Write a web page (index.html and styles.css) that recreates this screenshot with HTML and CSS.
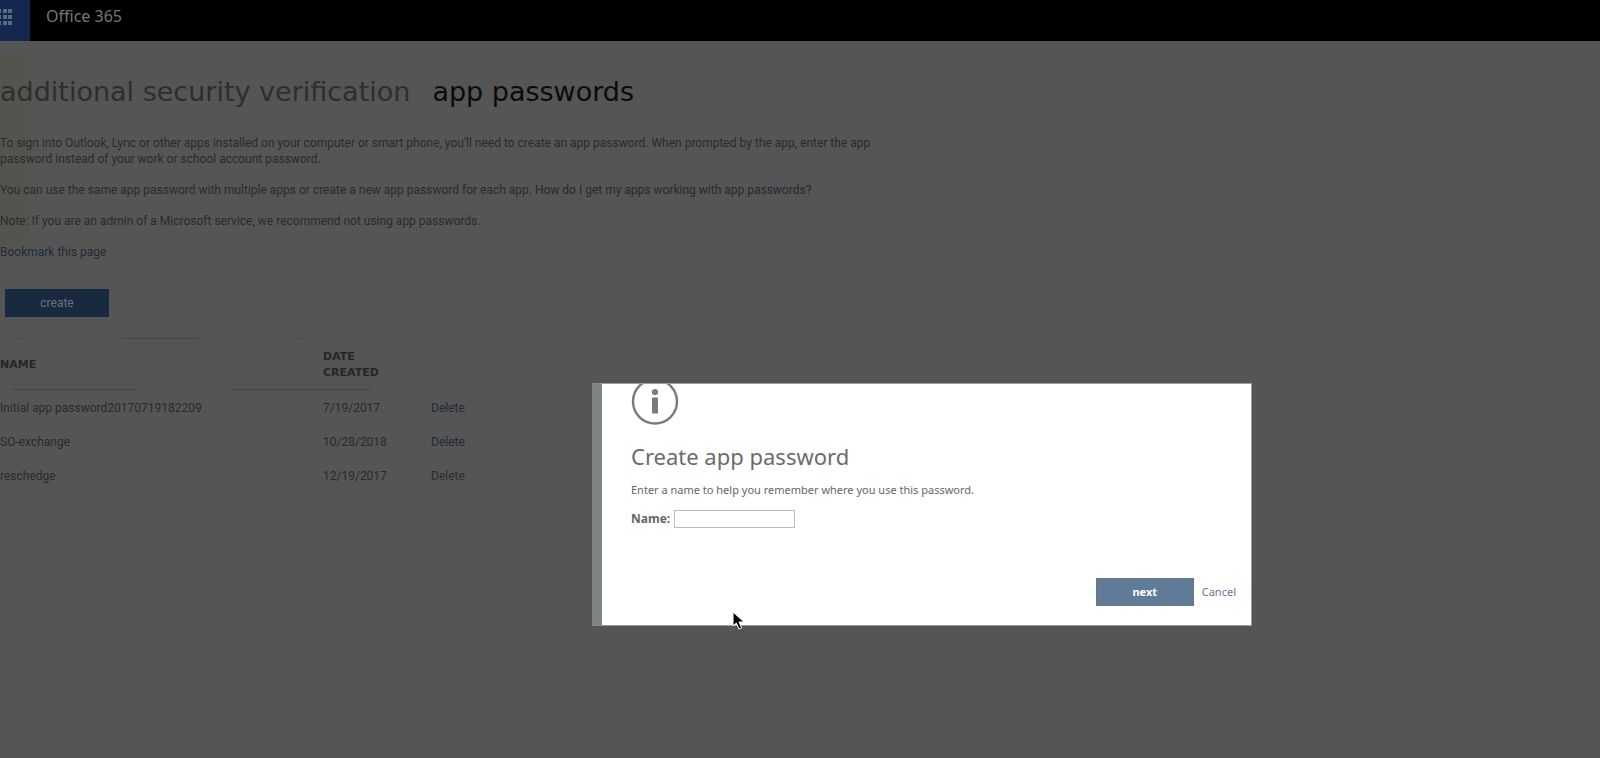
FILE: index.html
```html
<!DOCTYPE html>
<html lang="en">
<head>
<meta charset="utf-8">
<title>App passwords</title>
<link rel="stylesheet" href="styles.css">
</head>
<body>
<header class="topbar">
  <button class="launcher" type="button" aria-label="App launcher">
    <svg width="13" height="18" viewBox="0 0 13 18" aria-hidden="true">
      <path d="M0 1h1v4H0zM3 1h4v4H3zM8 1h4v4H8zM0 7h1v4H0zM3 7h4v4H3zM8 7h4v4H8zM0 13h1v4H0zM3 13h4v4H3zM8 13h4v4H8z"/>
    </svg>
  </button>
  <span class="brand">Office 365</span>
</header>
<main class="page">
  <nav class="tabs">
    <a class="tab" href="#verification">additional security verification</a>
    <h1 class="tab tab-current">app passwords</h1>
  </nav>
  <div class="intro">
    <p>To sign into Outlook, Lync or other apps installed on your computer or smart phone, you'll need to create an app password. When prompted by the app, enter the app password instead of your work or school account password.</p>
    <p>You can use the same app password with multiple apps or create a new app password for each app. <a href="#help">How do I get my apps working with app passwords?</a></p>
    <p>Note: If you are an admin of a Microsoft service, we recommend not using app passwords.</p>
    <p><a href="#bookmark">Bookmark this page</a></p>
  </div>
  <button class="create" type="button">create</button>
  <table class="passwords">
    <thead>
      <tr><th class="col-name" scope="col">NAME</th><th class="col-date" scope="col">DATE CREATED</th><td class="col-action"></td></tr>
    </thead>
    <tbody>
      <tr><td>Initial app password20170719182209</td><td>7/19/2017</td><td><a href="#d1">Delete</a></td></tr>
      <tr><td>SO-exchange</td><td>10/28/2018</td><td><a href="#d2">Delete</a></td></tr>
      <tr><td>reschedge</td><td>12/19/2017</td><td><a class="muted" href="#d3">Delete</a></td></tr>
    </tbody>
  </table>
</main>
<section class="dialog" role="dialog" aria-labelledby="dialog-title">
  <svg class="info" width="48" height="42" viewBox="0 0 48 42" aria-hidden="true">
    <circle cx="24" cy="17.500" r="22" fill="none" stroke="#7b7b7b" stroke-width="2.400"/>
    <circle cx="24" cy="8" r="3.100" fill="#7b7b7b"/>
    <path d="M21 13.500h6v16h-6z" fill="#7b7b7b"/>
  </svg>
  <h2 class="dialog-title" id="dialog-title">Create app password</h2>
  <p class="dialog-text">Enter a name to help you remember where you use this password.</p>
  <div class="field">
    <label for="name">Name:</label>
    <input id="name" type="text">
  </div>
  <div class="actions">
    <button class="next" type="button">next</button>
    <a class="cancel" href="#cancel">Cancel</a>
  </div>
</section>
<svg class="cursor" width="13" height="20" viewBox="0 0 13 20" aria-hidden="true">
  <path d="M1 1v14l3.300-3 2.700 6 2.600-1.200-2.600-5.800H12z" fill="#000" stroke="#fff"/>
</svg>
</body>
</html>
```
FILE: styles.css
```css
* {
  box-sizing: border-box;
}

body {
  margin: 0;
  min-height: 100vh;
  background: #555;
  color: #2b2b2b;
  font: 12px/16px Roboto, "Noto Sans", sans-serif;
}

a {
  color: #202c36;
  text-decoration: none;
}

.topbar {
  display: flex;
  align-items: stretch;
  height: 41px;
  background: #000;
}

.launcher {
  display: flex;
  align-items: flex-start;
  width: 30px;
  padding: 8px 0 0;
  border: 0;
  background: #14274e;
}

.launcher svg {
  fill: #5b6a80;
}

.brand {
  padding: 6px 16px;
  color: #777;
  font-family: "Noto Sans", sans-serif;
  font-size: 16px;
  line-height: 20px;
}

.page {
  padding-top: 31px;
  background: linear-gradient(#54544e, #54544e) 0 14px / 30px 190px no-repeat;
}

.tabs {
  display: flex;
  gap: 22px;
  font-family: "DejaVu Sans", sans-serif;
}

.tab {
  margin: 0;
  color: #2e2e2e;
  font-size: 27px;
  font-weight: 400;
  line-height: 40px;
}

.tab-current {
  color: #0b0b0b;
}

.intro {
  max-width: 900px;
  padding-top: 23px;
}

.intro p {
  margin: 0 0 15px;
}

.create {
  display: block;
  width: 104px;
  height: 28px;
  margin: 29px 0 21px 5px;
  padding: 0;
  border: 0;
  background: #172a40;
  color: #66717e;
  font: inherit;
}

.passwords {
  border-collapse: collapse;
  table-layout: fixed;
  width: 490px;
}

.passwords thead {
  background:
    linear-gradient(#454545, #454545) 122px 0 / 77px 1px no-repeat,
    linear-gradient(#4b4b4b, #4b4b4b) 12px 0 / 15px 1px no-repeat,
    linear-gradient(#4b4b4b, #4b4b4b) 292px 0 / 16px 1px no-repeat,
    linear-gradient(#454545, #454545) 12px 100% / 125px 1px no-repeat,
    linear-gradient(#454545, #454545) 230px 100% / 141px 1px no-repeat;
}

.passwords th,
.passwords td {
  padding: 10px 0 8px;
  text-align: left;
}

.passwords th {
  padding: 11px 40px 9px 0;
  color: #262626;
  font-family: "DejaVu Sans", sans-serif;
  font-size: 11px;
  font-weight: 700;
}

.col-name {
  width: 323px;
}

.col-date {
  width: 108px;
}

.passwords .muted {
  color: #2b2e31;
}

.dialog {
  position: absolute;
  top: 383px;
  left: 37%;
  width: 660px;
  padding: 0 15px 19px 29px;
  border: 1px solid #999;
  border-left: 10px solid #7e8385;
  background: #fff;
  color: #666;
  font-family: "Noto Sans", sans-serif;
  font-size: 11px;
}

.info {
  display: block;
}

.dialog-title {
  margin: 14px 0 10px;
  color: #6b6b6b;
  font-size: 22px;
  font-weight: 400;
  line-height: 32px;
}

.dialog-text {
  margin: 0 0 12px;
}

.field {
  display: flex;
  align-items: center;
  gap: 4px;
}

.field label {
  font-size: 12px;
  font-weight: 700;
}

.field input {
  width: 121px;
  height: 18px;
  border: 1px solid #bbb;
  background: #fff;
  font: inherit;
}

.actions {
  display: flex;
  justify-content: flex-end;
  align-items: center;
  gap: 8px;
  margin-top: 50px;
}

.next {
  width: 98px;
  height: 28px;
  padding: 0;
  border: 1px solid #66758a;
  background: #607b98;
  color: #fff;
  font: inherit;
  font-weight: 700;
}

.cancel {
  color: #66738f;
}

.cursor {
  position: absolute;
  top: 611px;
  left: 732px;
}
```
